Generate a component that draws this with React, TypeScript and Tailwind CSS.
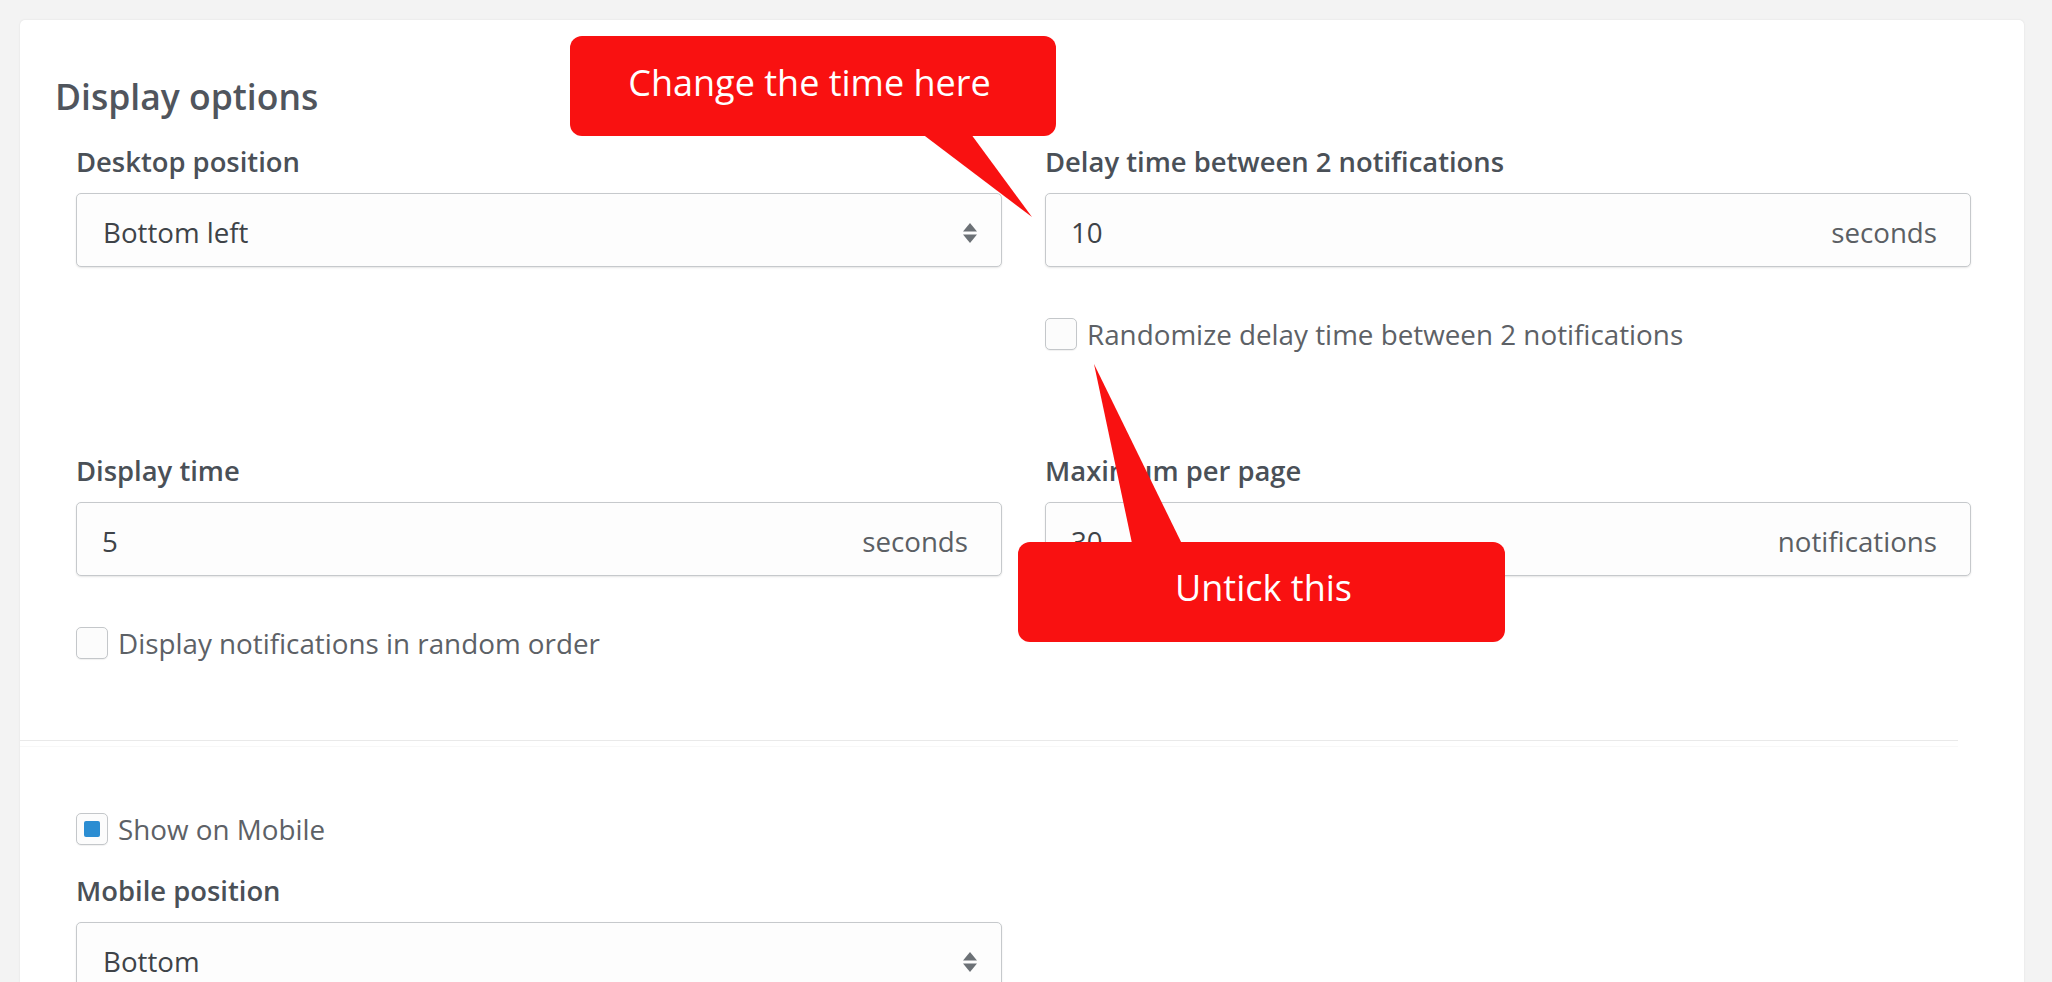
import React from "react";

const Label = ({ children }: { children: React.ReactNode }) => (
  <div className="text-[27.4px] leading-[34px] font-semibold text-[#4a5057] whitespace-nowrap">{children}</div>
);

const Arrows = () => (
  <svg width="16" height="22" viewBox="0 0 16 22" className="mt-[6px] shrink-0">
    <polygon points="1,9.5 15,9.5 8,1" fill="#6c7176" />
    <polygon points="1,12.5 15,12.5 8,21" fill="#6c7176" />
  </svg>
);

const SelectBox = ({ value }: { value: string }) => (
  <div className="mt-[14px] h-[74px] rounded-[5px] border border-[#c6c9cc] bg-[#fdfdfd] shadow-[0_1px_2px_rgba(0,0,0,0.10)] flex items-center justify-between pl-[26px] pr-[23px]">
    <span className="text-[27.7px] leading-[32px] text-[#3e4348] pt-[3px]">{value}</span>
    <Arrows />
  </div>
);

const InputBox = ({ value, suffix }: { value: string; suffix: string }) => (
  <div className="mt-[14px] h-[74px] rounded-[5px] border border-[#c6c9cc] bg-[#fdfdfd] shadow-[0_1px_2px_rgba(0,0,0,0.10)] flex items-center justify-between pl-[25px] pr-[33px]">
    <span className="text-[27.7px] leading-[32px] text-[#3e4348] pt-[3px]">{value}</span>
    <span className="text-[27.7px] leading-[32px] text-[#5b5f64] pt-[3px]">{suffix}</span>
  </div>
);

const Check = ({ label, checked = false, className = "" }: { label: string; checked?: boolean; className?: string }) => (
  <div className={`flex items-center gap-[10px] ${className}`}>
    <span className="w-[32px] h-[32px] rounded-[5px] border border-[#c4c7ca] bg-[#fcfcfc] shadow-[0_1px_1px_rgba(0,0,0,0.06)] flex items-center justify-center shrink-0">
      {checked && <span className="w-[16px] h-[16px] rounded-[2px] bg-[#2b8dd2]" />}
    </span>
    <span className="text-[27.8px] leading-[32px] text-[#5d6166] whitespace-nowrap">{label}</span>
  </div>
);

export default function App() {
  return (
    <div className="relative w-[2052px] h-[982px] overflow-hidden bg-[#f3f3f3] pt-[20px] pl-[20px] pr-[28px] [font-family:'Open_Sans','Noto_Sans',sans-serif]">
      <div className="h-[962px] bg-white rounded-t-[5px] shadow-[0_0_2px_rgba(0,0,0,0.10)]">
        <section className="pl-[35px] pr-[32px] pt-[55px] pb-[81px]">
          <h2 className="text-[35.5px] leading-[42px] font-semibold text-[#50555d]">Display options</h2>
          <div className="mt-[28px] pl-[21px] pr-[21px] grid grid-cols-2 gap-x-[43px] gap-y-[104px]">
            <div>
              <Label>Desktop position</Label>
              <SelectBox value="Bottom left" />
            </div>
            <div>
              <Label>Delay time between 2 notifications</Label>
              <InputBox value="10" suffix="seconds" />
              <Check className="mt-[51px]" label="Randomize delay time between 2 notifications" />
            </div>
            <div>
              <Label>Display time</Label>
              <InputBox value="5" suffix="seconds" />
              <Check className="mt-[51px]" label="Display notifications in random order" />
            </div>
            <div>
              <Label>Maximum per page</Label>
              <InputBox value="30" suffix="notifications" />
            </div>
          </div>
        </section>
        <div className="h-px bg-[#e9e9e9] mr-[66px]" />
        <div className="h-px bg-[#f8f8f8] mr-[66px] mt-[5px]" />
        <section className="pl-[56px] pr-[53px] pt-[66px]">
          <Check checked label="Show on Mobile" />
          <div className="mt-[29px] w-[926px]">
            <Label>Mobile position</Label>
            <SelectBox value="Bottom" />
          </div>
        </section>
      </div>

      <svg className="absolute left-0 top-0 pointer-events-none" width="2052" height="982" viewBox="0 0 2052 982">
        <polygon points="917,130 968,130 1032,217" fill="#f91111" />
        <polygon points="1133,548 1184,548 1094,364" fill="#f91111" />
      </svg>

      <div className="absolute left-[570px] top-[36px] w-[486px] h-[100px] rounded-[12px] bg-[#f91111] flex items-center justify-center pr-[7px] pb-[7px]">
        <span className="text-[36px] leading-[44px] text-white whitespace-nowrap">Change the time here</span>
      </div>
      <div className="absolute left-[1018px] top-[542px] w-[487px] h-[100px] rounded-[12px] bg-[#f91111] flex items-center justify-center pl-[4px] pb-[8px]">
        <span className="text-[36px] leading-[44px] text-white whitespace-nowrap">Untick this</span>
      </div>
    </div>
  );
}
